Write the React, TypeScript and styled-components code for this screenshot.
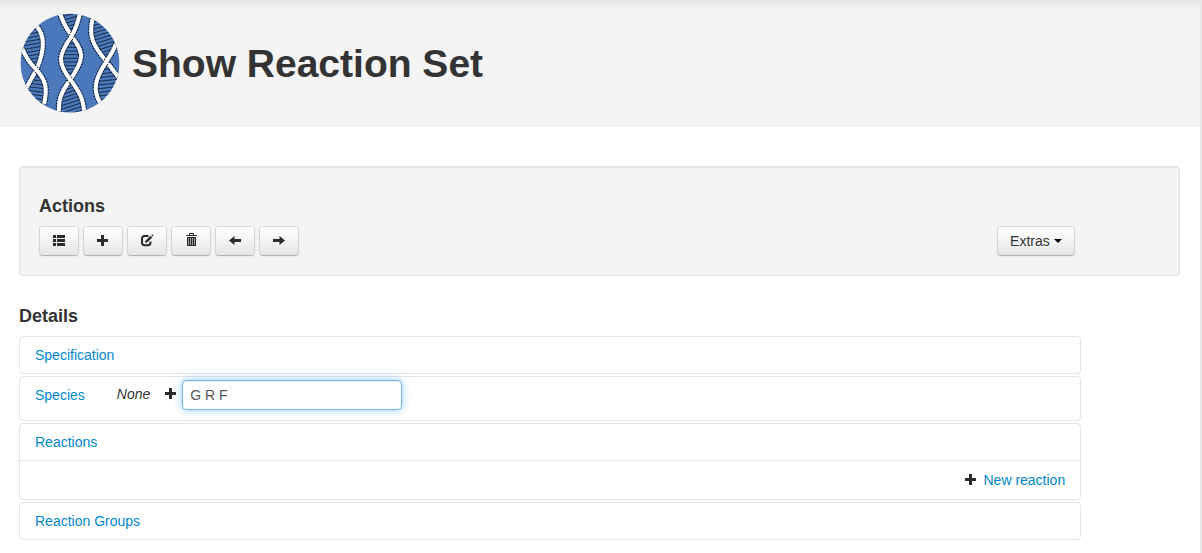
import React, { useState } from "react";
import styled, { createGlobalStyle } from "styled-components";

const GlobalStyle = createGlobalStyle`
  *, *::before, *::after { box-sizing: border-box; }
  body {
    margin: 0;
    background: #fff;
    color: #333;
    font-family: "Helvetica Neue", "Liberation Sans", Arial, sans-serif;
    font-size: 14px;
    line-height: 20px;
  }
`;

const Page = styled.div`
  min-height: 100vh;
  border-right: 2px solid #e6e6e6;
`;

const Header = styled.header`
  display: flex;
  align-items: center;
  gap: 12px;
  padding: 13px 20px 12px;
  background: linear-gradient(#e7e7e7, #f4f4f4 10px);
  border-bottom: 1px solid #e8e8e8;
`;

const Title = styled.h1`
  margin: 0;
  padding-top: 2px;
  font-size: 39px;
  line-height: 40px;
`;

const Main = styled.main`
  padding: 40px 20px 12px 19px;
`;

const Well = styled.section`
  padding: 29px 19px 19px;
  background: #f4f4f4;
  border: 1px solid #e1e1e1;
  border-radius: 4px;
  box-shadow: inset 0 1px 1px rgba(0, 0, 0, 0.05);
`;

const SectionTitle = styled.h4`
  margin: 0 0 10px;
  font-size: 18px;
  line-height: 20px;
`;

const Toolbar = styled.div`
  display: flex;
  width: 92.4%;
  gap: 4px;
`;

const Button = styled.button<{ $end?: boolean }>`
  display: inline-flex;
  align-items: center;
  gap: 4px;
  height: 30px;
  margin: 0 0 0 ${(p) => (p.$end ? "auto" : "0")};
  padding: 4px 12px;
  border: 1px solid #ccc;
  border-color: #dadada #d4d4d4 #b3b3b3;
  border-radius: 4px;
  background: linear-gradient(#fff, #e6e6e6);
  box-shadow: inset 0 1px 0 rgba(255, 255, 255, 0.2), 0 1px 2px rgba(0, 0, 0, 0.05);
  color: #333;
  font: inherit;
  text-shadow: 0 1px 1px rgba(255, 255, 255, 0.75);
  cursor: pointer;
`;

const Caret = styled.span`
  border: 4px solid transparent;
  border-top-color: #000;
  border-bottom: 0;
`;

const Details = styled.section`
  width: 91.49%;
  margin-top: 30px;
`;

const Group = styled.div`
  margin-bottom: 2px;
  border: 1px solid #e5e5e5;
  border-radius: 4px;
`;

const Heading = styled.div`
  display: flex;
  padding: 8px 15px;
`;

const SpeciesRow = styled.div`
  display: flex;
  align-items: flex-start;
  padding: 3px 15px 10px;
`;

const RowItem = styled.div`
  padding-top: 5px;
  margin-right: 32px;
`;

const None = styled.em`
  padding-top: 4px;
  margin-right: 14px;
`;

const AddSlot = styled.span`
  display: flex;
  padding-top: 7px;
  margin-right: 4px;
`;

const Inner = styled.div`
  display: flex;
  justify-content: flex-end;
  align-items: center;
  gap: 5px;
  padding: 9px 15px;
  border-top: 1px solid #e5e5e5;
`;

const Link = styled.a`
  color: #08c;
  text-decoration: none;
`;

const TextBox = styled.input`
  width: 220px;
  height: 30px;
  padding: 4px 7px;
  border: 1px solid #72b6ee;
  border-radius: 4px;
  outline: 0;
  background: #fff;
  box-shadow: inset 0 1px 1px rgba(0, 0, 0, 0.075), 0 0 8px rgba(82, 168, 236, 0.6);
  color: #555;
  font: inherit;
`;

const Glyph = styled.svg`
  display: block;
  flex: none;
  width: 14px;
  height: 14px;
  fill: #2b2b2b;
`;

type IconName = "list" | "plus" | "edit" | "trash" | "left" | "right";

const shapes: Record<IconName, React.ReactNode> = {
  list: <path d="M1 1h3v3H1zM5 1h8v3H5zM1 5h3v3H1zM5 5h8v3H5zM1 9h3v3H1zM5 9h8v3H5z" />,
  plus: <path d="M5 1h3v4h4v3H8v4H5V8H1V5h4z" />,
  edit: (
    <>
      <path
        d="M8.500 2H4.600Q2 2 2 4.800V8.600Q2 11.200 4.600 11.200H7.900Q10.500 11.200 10.500 8.600V7.500"
        fill="none"
        stroke="#2b2b2b"
        strokeWidth="2"
      />
      <path d="M5 9l.6-2.400 5-4.900 1.700 1.700-5 4.900zM11.300 1.100l.9-.9 1.500 1.500-.9.9z" />
    </>
  ),
  trash: (
    <>
      <path d="M2 1h3V-1h5v2h3v1H2zM6 0v1h3V0z" fillRule="evenodd" />
      <path d="M3 3h9v9H3z" />
      <path d="M4.500 4v7M6.500 4v7M8.500 4v7M10.500 4v7" stroke="#999" strokeWidth="1" fill="none" />
    </>
  ),
  left: <path d="M1 6.500L6.500 2v3H13v3H6.500v3z" />,
  right: <path d="M13 6.500L7.500 2v3H1v3h6.500v3z" />,
};

function Icon({ name }: { name: IconName }) {
  return (
    <Glyph viewBox="0 0 14 14" overflow="visible" aria-hidden="true">
      {shapes[name]}
    </Glyph>
  );
}

const strands = [
  "M78 76C104 104 107 145 80 207L50 262",
  "M37 146C48 174 62 192 80 210C108 242 113 265 102 312",
  "M150 38C158 70 174 92 190 115C221 158 224 176 180 240C150 282 145 300 147 340",
  "M210 38C205 65 198 85 184 110C145 165 142 188 180 238C212 280 220 300 223 340",
  "M248 55C236 105 245 133 290 185L328 235",
  "M318 132C310 152 302 165 289 185C254 238 248 270 270 308",
];

const cells = [
  "M78 76C104 104 107 145 80 207C62 190 48 170 37 146L40 80Z",
  "M80 210C108 242 113 265 102 312H40L50 262Z",
  "M150 38H210C205 65 198 85 186 108C174 92 158 70 150 38Z",
  "M186 110C221 158 224 176 180 240C142 188 145 165 186 110Z",
  "M180 240C212 280 220 300 223 340H147C145 300 150 282 180 240Z",
  "M248 55L330 90L318 132C310 152 302 165 290 185C245 133 236 105 248 55Z",
  "M290 185L328 235V308H270C248 270 254 238 290 185Z",
];

const rungs = Array.from({ length: 29 }, (_, i) => 32 + i * 11);

function Logo() {
  return (
    <svg width="100" height="100" viewBox="30 39 300 300" role="img" aria-label="DNA">
      <defs>
        <clipPath id="disc">
          <circle cx="180" cy="189.500" r="148" />
        </clipPath>
        <clipPath id="cells">
          {cells.map((d) => (
            <path key={d} d={d} />
          ))}
        </clipPath>
      </defs>
      <g clipPath="url(#disc)" fill="none">
        <path d="M30 39h300v300H30z" fill="#4a78bb" />
        <g clipPath="url(#cells)" stroke="#1b2c45" strokeWidth="3">
          {rungs.map((y) => (
            <g key={y}>
              <path d={y > 225 ? `M30 ${y - 6}L125 ${y + 6}` : `M30 ${y + 8}L125 ${y - 8}`} />
              <path
                d={
                  y < 110
                    ? `M130 ${y + 14}L235 ${y - 14}`
                    : y < 240
                      ? `M130 ${y}H235`
                      : `M130 ${y + 18}L235 ${y - 16}`
                }
              />
              <path d={y < 185 ? `M238 ${y + 16}L330 ${y - 12}` : `M238 ${y + 6}L330 ${y - 4}`} />
            </g>
          ))}
        </g>
        {strands.map((d) => (
          <g key={d}>
            <path d={d} stroke="#101a2a" strokeWidth="19" strokeDasharray="4 4" />
            <path d={d} stroke="#fff" strokeWidth="12" />
          </g>
        ))}
      </g>
    </svg>
  );
}

const actions: { icon: IconName; label: string }[] = [
  { icon: "list", label: "List" },
  { icon: "plus", label: "Add" },
  { icon: "edit", label: "Edit" },
  { icon: "trash", label: "Delete" },
  { icon: "left", label: "Previous" },
  { icon: "right", label: "Next" },
];

export default function App() {
  const [species, setSpecies] = useState("G R F");
  return (
    <>
      <GlobalStyle />
      <Page>
        <Header>
          <Logo />
          <Title>Show Reaction Set</Title>
        </Header>
        <Main>
          <Well>
            <SectionTitle>Actions</SectionTitle>
            <Toolbar>
              {actions.map((a) => (
                <Button key={a.icon} type="button" aria-label={a.label}>
                  <Icon name={a.icon} />
                </Button>
              ))}
              <Button type="button" $end aria-haspopup="menu">
                Extras
                <Caret />
              </Button>
            </Toolbar>
          </Well>
          <Details>
            <SectionTitle>Details</SectionTitle>
            <Group>
              <Heading>
                <Link href="#specification">Specification</Link>
              </Heading>
            </Group>
            <Group>
              <SpeciesRow>
                <RowItem>
                  <Link href="#species" id="species-label">Species</Link>
                </RowItem>
                <None>None</None>
                <AddSlot>
                  <Icon name="plus" />
                </AddSlot>
                <TextBox
                  type="text"
                  aria-labelledby="species-label"
                  value={species}
                  onChange={(e) => setSpecies(e.target.value)}
                />
              </SpeciesRow>
            </Group>
            <Group>
              <Heading>
                <Link href="#reactions">Reactions</Link>
              </Heading>
              <Inner>
                <Icon name="plus" />
                <Link href="#new-reaction">New reaction</Link>
              </Inner>
            </Group>
            <Group>
              <Heading>
                <Link href="#reaction-groups">Reaction Groups</Link>
              </Heading>
            </Group>
          </Details>
        </Main>
      </Page>
    </>
  );
}
